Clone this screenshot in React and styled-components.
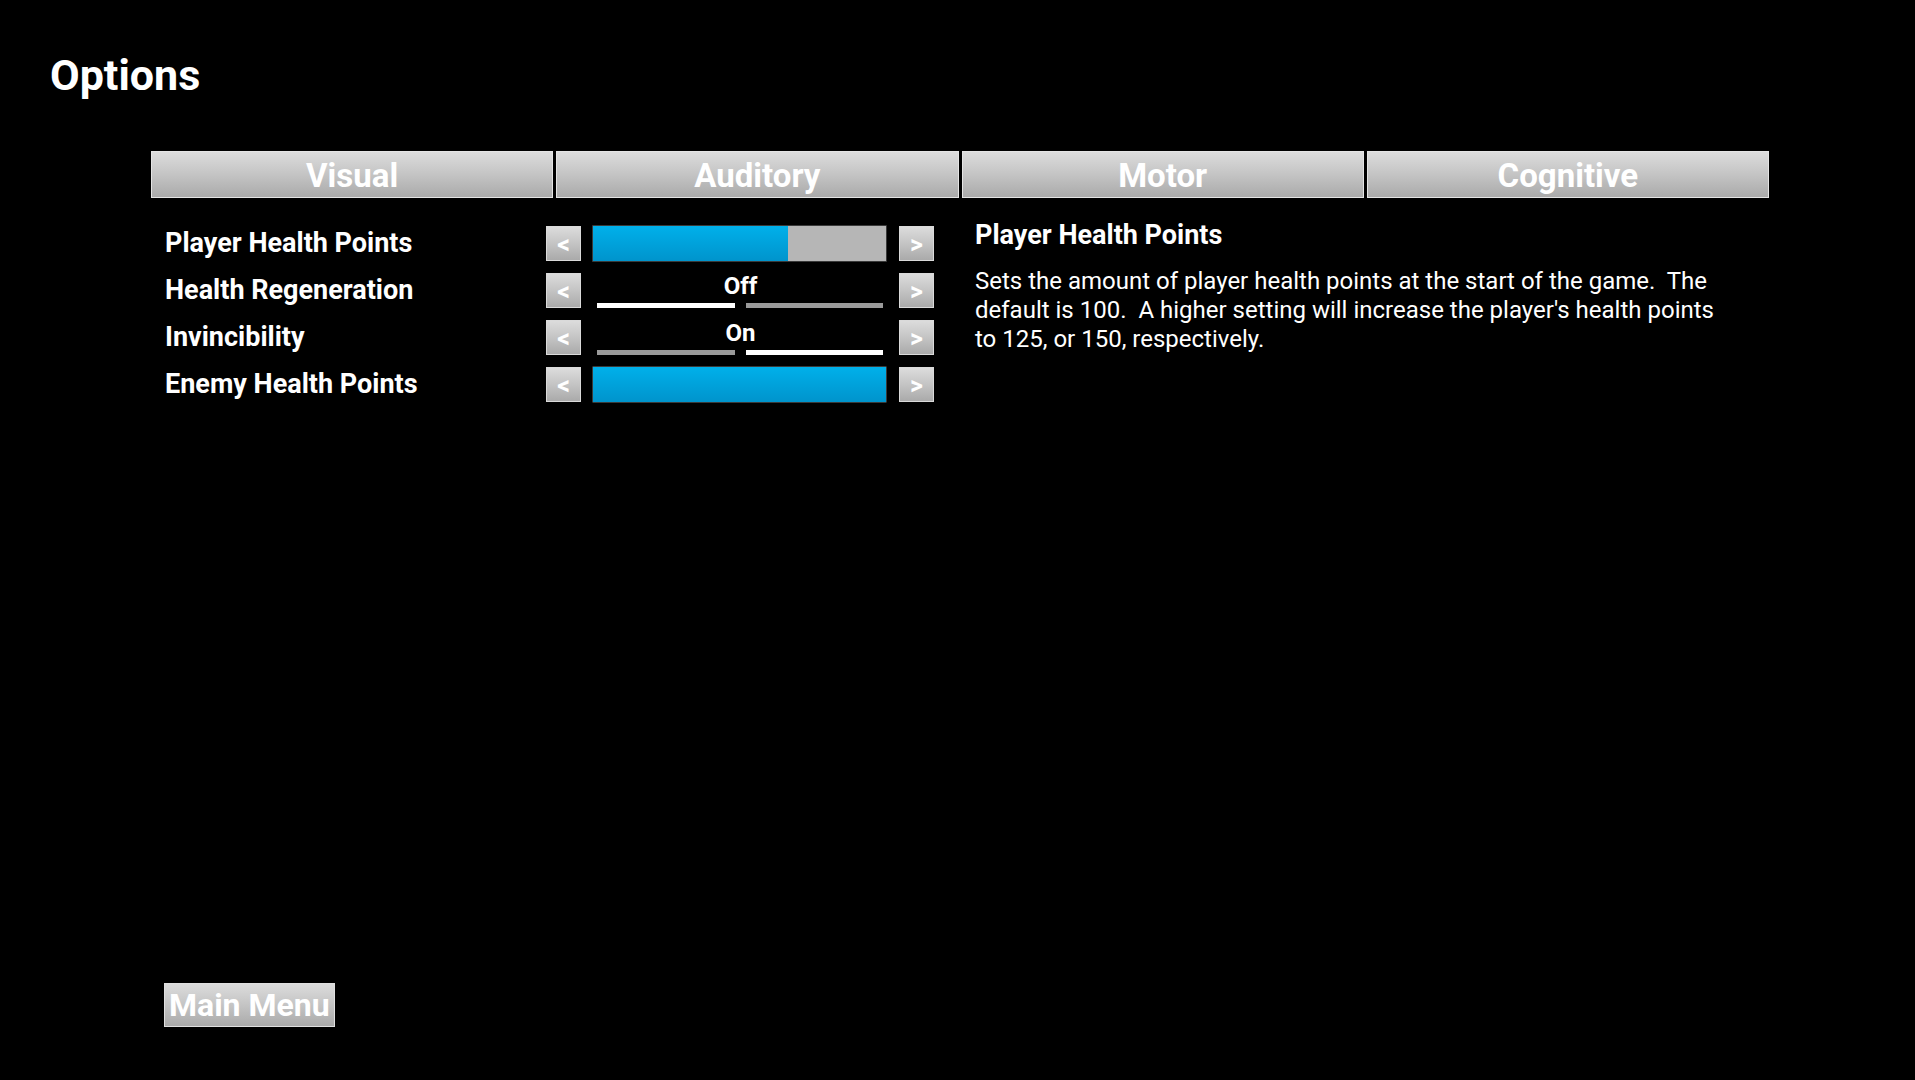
import React from "react";
import styled, { createGlobalStyle } from "styled-components";

const Global = createGlobalStyle`
  html, body { margin: 0; padding: 0; background: #000; }
  body { font-family: Roboto, "Liberation Sans", Arial, sans-serif; color: #fff; }
  * { box-sizing: border-box; }
`;

const Page = styled.div`
  height: 100vh;
  display: flex;
  flex-direction: column;
  padding: 54px 0 53px 50px;
  background: #000;
`;

const Title = styled.h1`
  margin: 0;
  font-size: 43px;
  line-height: 43px;
  font-weight: 700;
  color: #fff;
`;

const Tabs = styled.div`
  margin: 54px 0 0 101px;
  width: 1618px;
  display: grid;
  grid-template-columns: repeat(4, 1fr);
  gap: 3px;
`;

const silver = `
  background: linear-gradient(to bottom, #dcdcdc 0%, #c4c4c4 50%, #aaaaaa 100%);
  border: 1px solid #e4e4e4;
  color: #fff;
  font-weight: 700;
`;

const Tab = styled.div`
  ${silver}
  height: 47px;
  display: flex;
  align-items: center;
  justify-content: center;
  font-size: 33px;
  padding-top: 1px;
`;

const Content = styled.div`
  margin: 28px 0 0 115px;
  display: flex;
  align-items: flex-start;
  gap: 41px;
`;

const Rows = styled.div`
  display: flex;
  flex-direction: column;
  gap: 12px;
`;

const Row = styled.div`
  display: flex;
  align-items: center;
  height: 35px;
`;

const Label = styled.div`
  width: 381px;
  font-size: 27px;
  font-weight: 700;
  line-height: 27px;
  margin-top: -1px;
`;

const Arrow = styled.div`
  ${silver}
  width: 35px;
  height: 35px;
  display: flex;
  align-items: center;
  justify-content: center;
  font-size: 25px;
  line-height: 25px;
  padding-top: 2px;
  border-color: #dadada;
`;

const Control = styled.div`
  width: 295px;
  margin: 0 12px 0 11px;
  height: 35px;
  display: flex;
  flex-direction: column;
  align-items: stretch;
`;

const Bar = styled.div`
  height: 37px;
  margin: -1px 0;
  background: #b6b6b6;
  border: 1px solid #3a3a3a;
  border-radius: 1px;
  overflow: hidden;
  display: flex;
`;

const Fill = styled.div`
  height: 100%;
  background: linear-gradient(to bottom, #00b0ea 0%, #009fd8 60%, #0094cc 100%);
`;

const ToggleText = styled.div`
  font-size: 24px;
  font-weight: 700;
  line-height: 24px;
  text-align: center;
  margin-top: 1px;
  padding-left: 2px;
`;

const Segments = styled.div`
  display: flex;
  gap: 11px;
  padding: 0 4px 0 5px;
  margin-top: 5px;
`;

const Segment = styled.div`
  flex: 1;
  height: 5px;
  background: ${(p) => (p.$on ? "#ffffff" : "#9a9a9a")};
`;

const Desc = styled.div`
  width: 755px;
  margin-top: -4px;
`;

const DescTitle = styled.div`
  font-size: 27px;
  font-weight: 700;
  line-height: 27px;
`;

const DescBody = styled.p`
  margin: 18px 0 0;
  font-size: 24px;
  line-height: 29px;
  font-weight: 400;
  white-space: pre-wrap;
`;

const Spacer = styled.div`
  flex: 1;
`;

const MainMenu = styled.button`
  ${silver}
  font-family: inherit;
  margin-left: 114px;
  align-self: flex-start;
  height: 44px;
  padding: 0 4px;
  font-size: 32px;
  line-height: 42px;
  border-color: #e0e0e0;
  cursor: pointer;
`;

const rows = [
  { label: "Player Health Points", type: "bar", value: 0.667 },
  { label: "Health Regeneration", type: "toggle", value: false },
  { label: "Invincibility", type: "toggle", value: true },
  { label: "Enemy Health Points", type: "bar", value: 1 },
];

export default function App() {
  return (
    <Page>
      <Global />
      <Title>Options</Title>
      <Tabs>
        {["Visual", "Auditory", "Motor", "Cognitive"].map((t) => (
          <Tab key={t}>{t}</Tab>
        ))}
      </Tabs>
      <Content>
        <Rows>
          {rows.map((r) => (
            <Row key={r.label}>
              <Label>{r.label}</Label>
              <Arrow>&lt;</Arrow>
              <Control>
                {r.type === "bar" ? (
                  <Bar>
                    <Fill style={{ width: `${r.value * 100}%` }} />
                  </Bar>
                ) : (
                  <>
                    <ToggleText>{r.value ? "On" : "Off"}</ToggleText>
                    <Segments>
                      <Segment $on={!r.value} />
                      <Segment $on={r.value} />
                    </Segments>
                  </>
                )}
              </Control>
              <Arrow>&gt;</Arrow>
            </Row>
          ))}
        </Rows>
        <Desc>
          <DescTitle>Player Health Points</DescTitle>
          <DescBody>
            {"Sets the amount of player health points at the start of the game.  The default is 100.  A higher setting will increase the player's health points to 125, or 150, respectively."}
          </DescBody>
        </Desc>
      </Content>
      <Spacer />
      <MainMenu>Main Menu</MainMenu>
    </Page>
  );
}
